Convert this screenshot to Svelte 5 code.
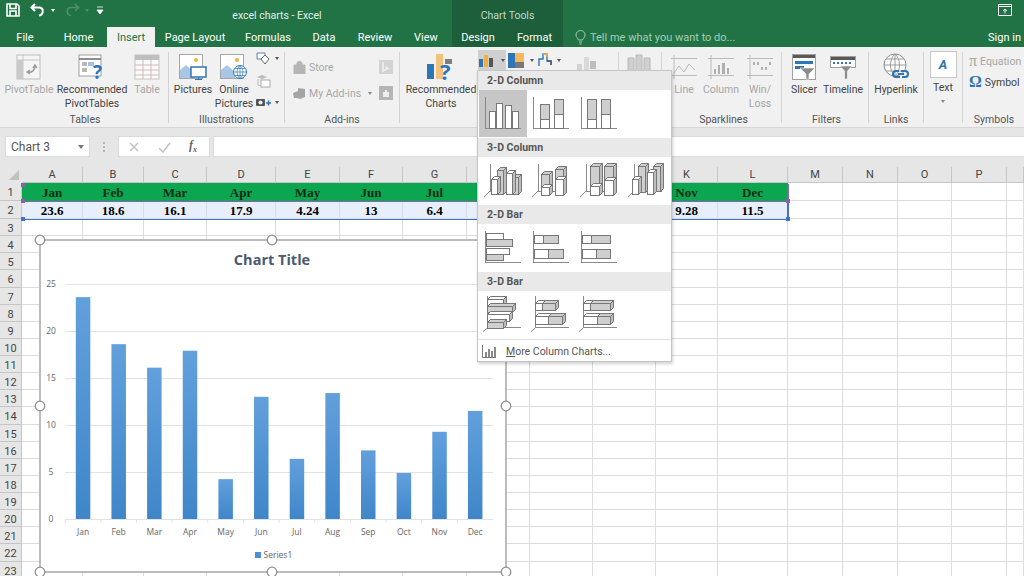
<script>
  const leftTabs = [
    ['File', 50], ['Home', 57], ['Insert', 48], ['Page Layout', 80],
    ['Formulas', 66], ['Data', 46], ['Review', 56], ['View', 46]
  ];
  // the last column runs off the right edge, its letter is not on screen
  const columns = [...'ABCDEFGHIJKLMNOP'.split(''), ''];
  const months = ['Jan', 'Feb', 'Mar', 'Apr', 'May', 'Jun', 'Jul', 'Aug', 'Sep', 'Oct', 'Nov', 'Dec'];
  const values = [23.6, 18.6, 16.1, 17.9, 4.24, 13, 6.4, 13.4, 7.3, 4.9, 9.28, 11.5];
  const rows = Array.from({ length: 23 }, (_, i) => i + 1);

  function cellText(row, index) {
    if (index >= 12) return '';
    if (row === 1) return months[index];
    if (row === 2) return values[index];
    return '';
  }

  const handles = [
    [40, 240], [272, 240], [506, 240], [40, 406],
    [506, 406], [40, 572], [272, 572], [506, 572]
  ];
  const ticks = [0, 5, 10, 15, 20, 25];
  const yOf = (v) => 519 - v * 9.4;
  const xOf = (i) => 83 + i * 35.65;

  const W = '#fff';
  const G = '#cfcfcf';

  // x, y, w, h, fill for the flat chart thumbnails
  const flatColumn = [
    [[10, 21, 6, 17, W], [17, 13, 6, 25, W], [26, 15, 6, 23, W], [33, 21, 6, 17, W]],
    [[13, 14, 9, 15, G], [13, 29, 9, 9, W], [27, 9, 9, 15, G], [27, 24, 9, 14, W]],
    [[12, 9, 9, 20, G], [12, 29, 9, 9, W], [26, 9, 9, 15, G], [26, 24, 9, 14, W]]
  ];
  const flatBar = [
    [[7, 9, 17, 6, W], [7, 15, 26, 7, G], [7, 24, 23, 6, W], [7, 30, 17, 6, G]],
    [[7, 11, 9, 8, W], [16, 11, 15, 8, G], [7, 25, 14, 9, W], [21, 25, 15, 9, G]],
    [[7, 11, 9, 8, W], [16, 11, 19, 8, G], [7, 25, 14, 9, W], [21, 25, 14, 9, G]]
  ];
  // x, y, w, h, fill, for the boxes with depth
  const boxColumn = [
    [[18, 13, 6, 24, G], [33, 20, 6, 17, G], [12, 22, 6, 15, W], [27, 16, 6, 21, W]],
    [[14, 17, 8, 13, G], [14, 30, 8, 8, W], [28, 12, 8, 10, G], [28, 22, 8, 16, W]],
    [[15, 9, 9, 20, G], [15, 29, 9, 9, W], [29, 9, 9, 14, G], [29, 23, 9, 15, W]],
    [[15, 9, 7, 26, G], [30, 9, 7, 25, G], [9, 22, 6, 15, W], [24, 15, 6, 22, W]]
  ];
  const boxBar = [
    [[8, 8, 16, 6, W], [8, 15, 25, 6, G], [8, 23, 22, 7, W], [8, 31, 16, 6, G]],
    [[8, 12, 7, 7, W], [15, 12, 13, 7, G], [8, 25, 13, 8, W], [21, 25, 14, 8, G]],
    [[8, 12, 7, 7, W], [15, 12, 20, 7, G], [8, 25, 14, 8, W], [22, 25, 13, 8, G]]
  ];

  function faces(x, y, w, h, d = 3) {
    return {
      top: `${x},${y} ${x + d},${y - d} ${x + w + d},${y - d} ${x + w},${y}`,
      side: `${x + w},${y} ${x + w + d},${y - d} ${x + w + d},${y + h - d} ${x + w},${y + h}`
    };
  }
</script>

{#snippet flat(sets, horizontal)}
  <div class="thumbs">
    {#each sets as bars, n}
      <div class="thumb" class:picked={!horizontal && n === 0}>
        <svg width="47" height="47" viewBox="0 0 47 47">
          <path d="M6.5 7v32M6 38.5h36" class="axis" />
          {#each bars as [x, y, w, h, fill]}
            <rect x={x + 0.5} y={y + 0.5} width={w} height={h} {fill} class="bar" />
          {/each}
        </svg>
      </div>
    {/each}
  </div>
{/snippet}

{#snippet boxes(sets, horizontal)}
  <div class="thumbs">
    {#each sets as bars}
      <div class="thumb">
        <svg width="47" height="47" viewBox="0 0 47 47">
          {#if horizontal}
            <path d="M8.5 5v32M8 37.5l-4 3M8 36.5h34" class="axis" />
          {:else}
            <path d="M11.5 7v28M11 34l-6 6M11 34.5h28" class="axis" />
          {/if}
          {#each bars as [x, y, w, h, fill]}
            {@const f = faces(x, y, w, h)}
            <rect x={x + 0.5} y={y + 0.5} width={w} height={h} {fill} class="bar" />
            <polygon points={f.top} transform="translate(.5 .5)" {fill} class="bar" />
            <polygon points={f.side} transform="translate(.5 .5)" fill="#bdbdbd" class="bar" />
          {/each}
        </svg>
      </div>
    {/each}
  </div>
{/snippet}

<div class="window">
  <header class="head">
    <div class="top-row">
      <div class="qat">
        <svg width="16" height="16" viewBox="0 0 16 16"><path d="M2 2h10l2 2v10H2zM5 2.5v4h6v-4M5 14v-5h6v5" fill="none" stroke="#fff" stroke-width="1.6" /></svg>
        <svg class="undo" width="18" height="16" viewBox="0 0 18 16"><path d="M6 2 2.5 5.5 6 9M3 5.5h7c5 0 5 7 0 8" fill="none" stroke="#fff" stroke-width="2" /></svg>
        <span class="caret"></span>
        <svg class="redo" width="18" height="16" viewBox="0 0 18 16"><path d="M12 2l3.5 3.5L12 9M15 5.5H8c-5 0-5 7 0 8" fill="none" stroke="#4b8f69" stroke-width="1.6" /></svg>
        <span class="caret off"></span>
        <svg class="custom" width="8" height="9" viewBox="0 0 8 9"><path d="M1 1h6M1 4h6l-3 4z" fill="#fff" stroke="#fff" stroke-width=".8" /></svg>
      </div>
      <div class="doc-title">excel charts - Excel</div>
      <div class="ctx-title">Chart Tools</div>
      <div class="win-ctl">
        <svg width="14" height="12" viewBox="0 0 14 12"><path d="M.5 .5h13v11H.5zM1 2.5h12M7 9.5V5M5 7l2-2 2 2" fill="none" stroke="#fff" /></svg>
      </div>
    </div>
    <nav class="tab-row">
      <div class="tabs">
        {#each leftTabs as [name, width]}
          <span class="tab" class:active={name === 'Insert'} style="width:{width}px">{name}</span>
        {/each}
      </div>
      <div class="ctx-tabs">
        <span class="tab design">Design</span>
        <span class="tab format">Format</span>
      </div>
      <div class="tell">
        <svg width="11" height="15" viewBox="0 0 11 15"><path d="M3.5 10C3 8 1 7.5 1 5a4.5 4.5 0 0 1 9 0c0 2.5-2 3-2.5 5zM4 12h3M4.5 14h2" fill="none" stroke="#a5cdb5" /></svg>
        <span>Tell me what you want to do...</span>
      </div>
      <span class="sign">Sign in</span>
    </nav>
  </header>

  <section class="ribbon">
    <div class="group g-tables">
      <div class="body">
        <div class="big off">
          <svg width="26" height="26" viewBox="0 0 26 26"><rect x="1" y="1" width="23" height="24" fill="#f5f5f5" stroke="#bdbdbd" /><path d="M1 6h23M7 1v24" stroke="#c8c8c8" fill="#d0d0d0" /><rect x="1" y="6" width="6" height="19" fill="#c9c9c9" /><path d="M12 18c4 1 7-2 7-6M17 14l2-3 2 3M14 16l-3 2 3 2" fill="none" stroke="#9a9a9a" stroke-width="1.4" /></svg>
          <span>PivotTable</span>
        </div>
        <div class="big">
          <svg width="28" height="26" viewBox="0 0 28 26"><rect x="1" y="1" width="22" height="21" fill="#fff" stroke="#a0a0a0" /><path d="M1 5h22" stroke="#8d8d8d" stroke-width="2" /><rect x="4" y="8" width="5" height="4" fill="#b8b8b8" /><rect x="10" y="8" width="6" height="4" fill="#9dc3e6" /><rect x="4" y="14" width="5" height="4" fill="#b8b8b8" /><text x="15" y="25" class="q">?</text></svg>
          <span>Recommended<br />PivotTables</span>
        </div>
        <div class="big off">
          <svg width="26" height="26" viewBox="0 0 26 26"><rect x="1" y="1" width="24" height="24" fill="#fafafa" stroke="#c4c4c4" /><rect x="1" y="1" width="24" height="5" fill="#bfbfbf" /><path d="M1 11h24M1 16h24M1 21h24M9 6v19M17 6v19" stroke="#d2b8b8" /></svg>
          <span>Table</span>
        </div>
      </div>
      <div class="name">Tables</div>
    </div>
    <i class="sep"></i>

    <div class="group g-illus">
      <div class="body">
        <div class="big">
          <svg width="28" height="26" viewBox="0 0 28 26"><rect x=".5" y=".5" width="23" height="24" fill="#fff" stroke="#a6a6a6" /><circle cx="17" cy="6" r="2" fill="#f0b040" /><path d="M1 24V16l6-5 8 7v6z" fill="#a9c6e6" /><rect x="12" y="13" width="15" height="10" fill="#fff" stroke="#2e75b6" stroke-width="1.5" /><path d="M19.5 23v2M16 25.5h7" stroke="#2e75b6" /></svg>
          <span>Pictures</span>
        </div>
        <div class="big">
          <svg width="28" height="26" viewBox="0 0 28 26"><rect x=".5" y=".5" width="23" height="24" fill="#fff" stroke="#a6a6a6" /><circle cx="17" cy="6" r="2" fill="#f0b040" /><path d="M1 24V16l6-5 8 7v6z" fill="#a9c6e6" /><circle cx="20" cy="18" r="6.5" fill="#fff" stroke="#2e75b6" /><path d="M13.5 18h13M20 11.5v13M15 14.5h10M15 21.5h10M20 11.5c-4 3-4 10 0 13M20 11.5c4 3 4 10 0 13" fill="none" stroke="#2e75b6" stroke-width=".7" /></svg>
          <span>Online<br />Pictures</span>
        </div>
        <div class="mini-stack">
          <div class="mini"><svg width="15" height="13" viewBox="0 0 15 13"><path d="M1 1h8v6H1z" fill="#fff" stroke="#5b83ad" /><path d="M9 3l4 4-4 5-4-5z" fill="#fff" stroke="#666" /></svg><span class="caret dark"></span></div>
          <div class="mini"><svg width="15" height="14" viewBox="0 0 15 14"><path d="M1 3l5-2 5 2-5 2z" fill="#bbb" /><rect x="5" y="6" width="9" height="7" fill="#fff" stroke="#aaa" /><path d="M2 5v6l3 1" stroke="#bbb" fill="none" /></svg></div>
          <div class="mini"><svg width="15" height="11" viewBox="0 0 15 11"><rect x="0" y="2" width="9" height="7" rx="1" fill="#555" /><circle cx="4.5" cy="5.5" r="2" fill="#eee" /><path d="M10 6h5M12.5 3.5v5" stroke="#2e75b6" stroke-width="1.6" /></svg><span class="caret dark"></span></div>
        </div>
      </div>
      <div class="name">Illustrations</div>
    </div>
    <i class="sep"></i>

    <div class="group g-addins">
      <div class="body addin-body">
        <div class="addin off">
          <svg width="13" height="13" viewBox="0 0 13 13"><path d="M1 4h11v9H1zM4 4V2c0-2 5-2 5 0v2" fill="#b5b5b5" stroke="#b5b5b5" /></svg>
          <span class="addin-label">Store</span>
          <svg width="14" height="14" viewBox="0 0 14 14"><rect width="14" height="14" fill="#d3d3d3" /><path d="M4 2v9l5-2.5L6.5 7" fill="none" stroke="#f2f2f2" stroke-width="1.5" /></svg>
        </div>
        <div class="addin off">
          <svg width="13" height="13" viewBox="0 0 13 13"><path d="M0 6l5-2V1l7 1v8l-5 2-3-1-3 0z" fill="#a5a5a5" /></svg>
          <span class="addin-label">My Add-ins</span>
          <span class="caret gray"></span>
          <svg width="14" height="14" viewBox="0 0 14 14"><rect width="14" height="14" fill="#b5b5b5" /><path d="M4 6h6v5H4zM6 6V4h2v2" fill="#eee" /></svg>
        </div>
      </div>
      <div class="name">Add-ins</div>
    </div>
    <i class="sep"></i>

    <div class="group g-charts">
      <div class="body">
        <div class="big rec">
          <svg width="32" height="28" viewBox="0 0 32 28"><rect x="2" y="11" width="7" height="15" fill="#2e75b6" /><rect x="11" y="1" width="7" height="25" fill="#f2c27a" /><rect x="20" y="6" width="7" height="5" fill="#7f7f7f" /><text x="15" y="27" class="q big-q">?</text></svg>
          <span>Recommended<br />Charts</span>
        </div>
        <div class="chart-btn on">
          <svg width="18" height="14" viewBox="0 0 18 14"><rect x="0" y="6" width="4" height="8" fill="#2e75b6" /><rect x="5" y="2" width="4" height="12" fill="#f0b040" /><rect x="10" y="5" width="4" height="9" fill="#555" /></svg>
          <span class="caret dark"></span>
        </div>
        <div class="chart-btn">
          <svg width="18" height="15" viewBox="0 0 18 15"><rect x="0" y="0" width="7" height="15" fill="#2e75b6" /><rect x="7" y="0" width="9" height="9" fill="#f4b860" /><rect x="7" y="9" width="9" height="6" fill="#777" /></svg>
          <span class="caret dark"></span>
        </div>
        <div class="chart-btn">
          <svg width="15" height="14" viewBox="0 0 15 14"><path d="M1 13V6h4V1h4v7h4v4" fill="none" stroke="#2e75b6" stroke-width="1.4" /><path d="M5 1h4v3" fill="none" stroke="#f0b040" stroke-width="1.4" /><path d="M9 8h4v4" fill="none" stroke="#555" stroke-width="1.4" /></svg>
          <span class="caret dark"></span>
        </div>
        <div class="pivot-chart">
          <svg width="26" height="17" viewBox="0 0 26 17"><rect x="0" y="9" width="5" height="7" fill="#d4d4d4" /><rect x="7" y="2" width="5" height="14" fill="#d9d9d9" /><rect x="13" y="6" width="6" height="8" fill="#bdbdbd" /><path d="M2 16h24" stroke="#d0d0d0" /></svg>
        </div>
      </div>
      <div class="name"></div>
    </div>
    <i class="sep"></i>

    <div class="group g-map">
      <div class="body map-body">
        <svg width="26" height="22" viewBox="0 0 26 22"><path d="M2 4h6v15H2zM10 1h6v18h-6zM18 4h6v15h-6z" fill="#cfcfcf" stroke="#b8b8b8" /></svg>
      </div>
      <div class="name"></div>
    </div>
    <i class="sep"></i>

    <div class="group g-spark">
      <div class="body">
        <div class="big off">
          <svg width="26" height="24" viewBox="0 0 26 24"><path d="M0 3.5h26M0 20.5h26M3 0v24M3 18l5-7 5 6 5-8 6 6" fill="none" stroke="#bbb" /></svg>
          <span>Line</span>
        </div>
        <div class="big off">
          <svg width="26" height="24" viewBox="0 0 26 24"><path d="M0 3.5h26M0 20.5h26M3 0v24" fill="none" stroke="#bbb" /><path d="M6 14h2v5H6zM10 10h2v9h-2zM14 8h3v11h-3zM19 13h2v6h-2z" fill="#b0b0b0" /></svg>
          <span>Column</span>
        </div>
        <div class="big off">
          <svg width="26" height="24" viewBox="0 0 26 24"><path d="M0 3.5h26M0 20.5h26M3 0v24" fill="none" stroke="#bbb" /><path d="M6 7h2v3H6zM10 7h2v3h-2zM14 12h2v3h-2zM18 12h2v3h-2zM22 7h2v3h-2z" fill="#b0b0b0" /></svg>
          <span>Win/<br />Loss</span>
        </div>
      </div>
      <div class="name">Sparklines</div>
    </div>
    <i class="sep"></i>

    <div class="group g-filters">
      <div class="body">
        <div class="big">
          <svg width="24" height="26" viewBox="0 0 24 26"><rect x=".5" y=".5" width="23" height="25" fill="#fff" stroke="#a0a0a0" /><rect x="1" y="1" width="22" height="3" fill="#595959" /><rect x="3" y="7" width="18" height="3" fill="#2e75b6" /><rect x="3" y="12" width="9" height="3" fill="#2e75b6" /><path d="M8 14h15l-6 6v5h-3v-5z" fill="#8c8c8c" stroke="#fff" stroke-width=".6" /></svg>
          <span>Slicer</span>
        </div>
        <div class="big">
          <svg width="26" height="26" viewBox="0 0 26 26"><rect x=".5" y="2.5" width="25" height="11" fill="#fff" stroke="#a0a0a0" /><rect x="1" y="3" width="24" height="3" fill="#595959" /><path d="M3 9h2M7 9h2M11 9h2M15 9h2M19 9h2" stroke="#2e75b6" stroke-width="2" /><path d="M10 12h12l-4.5 5v8h-3v-8z" fill="#8c8c8c" stroke="#fff" stroke-width=".6" /></svg>
          <span>Timeline</span>
        </div>
      </div>
      <div class="name">Filters</div>
    </div>
    <i class="sep"></i>

    <div class="group g-links">
      <div class="body">
        <div class="big">
          <svg width="26" height="28" viewBox="0 0 26 28"><circle cx="12" cy="12" r="11" fill="#fff" stroke="#8a8a8a" /><path d="M1 12h22M12 1v22M3 6h18M3 18h18M12 1c-6 5-6 17 0 22M12 1c6 5 6 17 0 22" fill="none" stroke="#9a9a9a" /><path d="M17 20h-3a3 3 0 0 0 0 6h4M20 26h3a3 3 0 0 0 0-6h-4M16 23h6" fill="none" stroke="#2e75b6" stroke-width="2" transform="translate(-1 -2)" /></svg>
          <span>Hyperlink</span>
        </div>
      </div>
      <div class="name">Links</div>
    </div>
    <i class="sep"></i>

    <div class="group g-text">
      <div class="body">
        <div class="big text-btn">
          <div class="text-box"><span>A</span></div>
          <span>Text</span>
          <span class="caret gray"></span>
        </div>
      </div>
      <div class="name"></div>
    </div>
    <i class="sep"></i>

    <div class="group g-sym">
      <div class="body sym-body">
        <div class="sym off"><b class="glyph">π</b><span>Equation</span></div>
        <div class="sym"><b class="glyph blue">Ω</b><span>Symbol</span></div>
      </div>
      <div class="name">Symbols</div>
    </div>
  </section>

  <div class="formula">
    <div class="namebox"><span>Chart 3</span><span class="caret dark"></span></div>
    <div class="dots"></div>
    <div class="fx-box">
      <svg width="12" height="12" viewBox="0 0 12 12"><path d="M2 2l8 8M10 2l-8 8" stroke="#c4c4c4" stroke-width="1.6" /></svg>
      <svg width="13" height="12" viewBox="0 0 13 12"><path d="M1 7l4 4 7-9" fill="none" stroke="#c4c4c4" stroke-width="1.6" /></svg>
      <span class="fx">f<sub>x</sub></span>
    </div>
    <div class="input"></div>
  </div>

  <main class="sheet">
    <div class="grid">
      <div class="corner"><i></i></div>
      {#each columns as col}
        <div class="col-head">{col}</div>
      {/each}
      {#each rows as row}
        <div class="row-head">{row}</div>
        {#each columns as col, index}
          <div
            class="cell"
            class:month={row === 1 && index < 12}
            class:value={row === 2 && index < 12}
          >{cellText(row, index)}</div>
        {/each}
      {/each}
    </div>

    <div class="range-one"></div>
    <div class="range-two"></div>
    <div class="range-end one"></div>
    <div class="range-end two"></div>
    <i class="dot purple d1"></i>
    <i class="dot purple d2"></i>
    <i class="dot purple d3"></i>
    <i class="dot blue d4"></i>
    <i class="dot blue d5"></i>

    <svg class="chart" width="478" height="344" viewBox="34 234 478 344">
      <defs>
        <linearGradient id="bar" x1="0" y1="0" x2="0" y2="1">
          <stop offset="0" stop-color="#62a0dc" />
          <stop offset="1" stop-color="#3f86c9" />
        </linearGradient>
      </defs>
      <rect x="40" y="240" width="466" height="332" fill="#fff" stroke="#a6a6a6" stroke-width="1.5" />
      <text x="272" y="265" text-anchor="middle" class="c-title">Chart Title</text>
      {#each ticks as t}
        <line x1="65" x2="493" y1={yOf(t) + 0.5} y2={yOf(t) + 0.5} stroke="#e2e2e2" />
        <text x="51" y={yOf(t) + 3} text-anchor="middle" class="c-label">{t}</text>
      {/each}
      {#each values as v, i}
        <rect x={xOf(i) - 7.2} y={yOf(v)} width="14.5" height={v * 9.4} fill="url(#bar)" />
        <line x1={xOf(i) - 17.8} x2={xOf(i) - 17.8} y1="519" y2="523" stroke="#e2e2e2" />
        <text x={xOf(i)} y="535" text-anchor="middle" class="c-label">{months[i]}</text>
      {/each}
      <rect x="255" y="552" width="6" height="6" fill="#4a90d2" />
      <text x="263.5" y="558" class="c-label">Series1</text>
      {#each handles as [x, y]}
        <circle cx={x} cy={y} r="4.8" fill="#fff" stroke="#8f8f8f" stroke-width="1.3" />
      {/each}
    </svg>
  </main>

  <aside class="menu">
    <h4>2-D Column</h4>
    {@render flat(flatColumn, false)}
    <h4>3-D Column</h4>
    {@render boxes(boxColumn, false)}
    <h4>2-D Bar</h4>
    {@render flat(flatBar, true)}
    <h4>3-D Bar</h4>
    {@render boxes(boxBar, true)}
    <div class="more">
      <svg width="14" height="13" viewBox="0 0 14 13"><path d="M.5 0v12.5H14" fill="none" stroke="#777" /><path d="M3 7h2v5H3zM6 4h2v8H6zM9 6h2v6H9zM12 2h2v10h-2z" fill="#888" /></svg>
      <span><u>M</u>ore Column Charts...</span>
    </div>
  </aside>
</div>

<style>
  :global(body) {
    margin: 0;
    background: #fff;
  }

  .window {
    position: relative;
    width: 1024px;
    height: 576px;
    overflow: hidden;
    font-family: Roboto, 'Open Sans', sans-serif;
    font-size: 10.5px;
    color: #444;
    background: #e6e6e6;
  }

  .head {
    background: #217346;
    color: #fff;
  }

  .top-row {
    display: flex;
    height: 27px;
  }

  .qat {
    width: 190px;
    display: flex;
    align-items: center;
    padding: 0 0 7px 5px;
    box-sizing: border-box;
  }

  .undo { margin-left: 8px; }
  .redo { margin-left: 8px; }
  .custom { margin-left: 7px; }

  .caret {
    display: inline-block;
    width: 0;
    height: 0;
    margin-left: 4px;
    border: 2.5px solid transparent;
    border-top: 3px solid #fff;
    border-bottom: 0;
  }

  .caret.off { border-top-color: #4b8f69; }
  .caret.dark { border-top-color: #555; }
  .caret.gray { border-top-color: #888; }

  .doc-title {
    width: 262px;
    padding: 9px 88px 0 0;
    text-align: center;
    box-sizing: border-box;
    color: #e3efe8;
  }

  .ctx-title {
    width: 111px;
    background: #1d5f3b;
    text-align: center;
    padding-top: 9px;
    box-sizing: border-box;
    color: #bfd9ca;
  }

  .win-ctl {
    flex: 1;
    display: flex;
    justify-content: flex-end;
    padding: 4px 12px 0 0;
    box-sizing: border-box;
  }

  .tab-row {
    display: flex;
    height: 20px;
    font-size: 11px;
  }

  .tabs {
    width: 452px;
    display: flex;
  }

  .tab {
    display: block;
    text-align: center;
    line-height: 21px;
    white-space: nowrap;
  }

  .tab.active {
    background: #f1f1f1;
    color: #217346;
  }

  .ctx-tabs {
    width: 111px;
    display: flex;
    background: #1d5f3b;
  }

  .design { width: 52px; }
  .format { width: 59px; padding-left: 2px; box-sizing: border-box; }

  .tell {
    flex: 1;
    display: flex;
    align-items: center;
    gap: 4px;
    padding: 1px 0 0 12px;
    color: #a5cdb5;
  }

  .sign {
    line-height: 21px;
    padding-right: 3px;
  }

  .ribbon {
    display: flex;
    height: 80px;
    background: #f1f1f1;
    border-bottom: 1px solid #d6d6d6;
  }

  .sep {
    flex: none;
    width: 1px;
    margin: 5px 0 4px;
    background: #d4d4d4;
  }

  .group {
    flex: none;
    display: flex;
    flex-direction: column;
    box-sizing: border-box;
  }

  .g-tables { width: 168px; padding-left: 2px; }
  .g-illus { width: 115px; }
  .g-addins { width: 114px; }
  .g-charts { width: 218px; }
  .g-map { width: 42px; }
  .g-spark { width: 119px; padding-left: 4px; }
  .g-filters { width: 86px; padding-left: 3px; }
  .g-links { width: 54px; }
  .g-text { width: 38px; }
  .g-sym { width: 62px; }

  .body {
    height: 65px;
    display: flex;
  }

  .name {
    height: 15px;
    text-align: center;
    line-height: 16px;
    color: #555;
  }

  .big {
    display: flex;
    flex-direction: column;
    align-items: center;
    text-align: center;
    line-height: 14px;
    flex: none;
  }

  .big svg {
    height: 28px;
    margin: 6px 0 2px;
  }

  .big span {
    white-space: nowrap;
  }

  .off { color: #a6a6a6; }

  .g-tables .big:nth-child(1) { width: 54px; }
  .g-tables .big:nth-child(2) { width: 72px; }
  .g-tables .big:nth-child(3) { width: 38px; }
  .g-illus .big:nth-child(1) { width: 48px; }
  .g-illus .big:nth-child(2) { width: 34px; }
  .g-spark .big:nth-child(1) { width: 36px; }
  .g-spark .big:nth-child(2) { width: 38px; }
  .g-spark .big:nth-child(3) { width: 40px; }
  .g-filters .big:nth-child(1) { width: 38px; }
  .g-filters .big:nth-child(2) { width: 40px; }
  .g-links .big { width: 54px; }

  .q {
    font-family: 'Open Sans', sans-serif;
    font-weight: 700;
    font-size: 19px;
    fill: #2e75b6;
  }

  .big-q { font-size: 22px; }

  .mini-stack {
    display: flex;
    flex-direction: column;
    gap: 7px;
    padding: 4px 0 0 5px;
  }

  .mini {
    display: flex;
    align-items: center;
    height: 15px;
  }

  .addin-body {
    flex-direction: column;
    gap: 4px;
    padding: 9px 6px 0 8px;
    box-sizing: border-box;
  }

  .addin {
    display: flex;
    align-items: center;
    height: 22px;
  }

  .addin-label {
    flex: 1;
    padding-left: 3px;
  }

  .addin .caret {
    margin-right: 7px;
  }

  .rec {
    width: 74px;
    padding-left: 4px;
  }

  .chart-btn {
    flex: none;
    display: flex;
    align-items: center;
    justify-content: center;
    height: 20px;
    margin-top: 3px;
    width: 28px;
  }

  .chart-btn.on {
    background: #cfcfcf;
  }

  .chart-btn:nth-child(3) { width: 30px; }
  .chart-btn:nth-child(4) { width: 27px; }

  .pivot-chart {
    padding: 8px 0 0 14px;
  }

  .map-body {
    padding: 7px 0 0 7px;
    box-sizing: border-box;
  }

  .text-btn {
    width: 38px;
  }

  .text-box {
    width: 25px;
    height: 25px;
    margin: 4px 0 3px;
    background: #fff;
    border: 1px solid #c6c6c6;
    display: flex;
    align-items: center;
    justify-content: center;
    font-weight: 700;
    font-style: italic;
    font-size: 13px;
    color: #2e75b6;
  }

  .text-btn .caret {
    margin: 5px 0 0;
  }

  .sym-body {
    flex-direction: column;
    gap: 3px;
    padding: 5px 0 0 6px;
    box-sizing: border-box;
  }

  .sym {
    display: flex;
    align-items: center;
    gap: 3px;
    height: 18px;
    white-space: nowrap;
  }

  .glyph {
    font-family: 'Liberation Serif', serif;
    font-size: 16px;
    font-weight: 400;
    color: #a6a6a6;
  }

  .glyph.blue { color: #2e75b6; font-weight: 700; }

  .formula {
    display: flex;
    align-items: stretch;
    height: 21px;
    margin-top: 8px;
    padding-left: 5px;
  }

  .namebox {
    width: 85px;
    background: #fff;
    border: 1px solid #dadada;
    box-sizing: border-box;
    display: flex;
    align-items: center;
    justify-content: space-between;
    padding: 0 5px;
    font-size: 12px;
    color: #555;
  }

  .namebox .caret {
    border-width: 3px;
    border-bottom: 0;
    border-top-width: 4px;
    border-top-color: #777;
  }

  .dots {
    width: 2px;
    margin: 6px 13px 5px;
    background: repeating-linear-gradient(#b5b5b5 0 2px, transparent 2px 4px);
  }

  .fx-box {
    width: 92px;
    background: #fff;
    border: 1px solid #dadada;
    box-sizing: border-box;
    display: flex;
    align-items: center;
    gap: 18px;
    padding-left: 9px;
  }

  .fx {
    font-family: 'Liberation Serif', serif;
    font-style: italic;
    font-size: 12px;
    font-weight: 700;
    color: #666;
  }

  .fx sub {
    font-size: 8px;
  }

  .input {
    flex: 1;
    margin-left: 3px;
    background: #fff;
    border: 1px solid #dadada;
    border-right: 0;
  }

  .sheet {
    position: relative;
    margin-top: 10px;
  }

  .grid {
    display: grid;
    grid-template-columns: 22px 61px 61px 63px 69px 64px 63px 64px 63px 63px 63px 62px 70px 55px 55px 54px 55px 17px;
    grid-template-rows: 16px 18px 18px;
    grid-auto-rows: 17.14px;
    background: #fff;
  }

  .corner {
    background: #e6e6e6;
    position: relative;
  }

  .corner i {
    position: absolute;
    right: 3px;
    bottom: 3px;
    border-style: solid;
    border-width: 0 0 10px 10px;
    border-color: transparent transparent #c0c0c0 transparent;
  }

  .col-head {
    background: #e6e6e6;
    border-right: 1px solid #c6c6c6;
    border-bottom: 1px solid #c6c6c6;
    box-sizing: border-box;
    text-align: center;
    line-height: 15px;
    font-size: 11px;
    color: #444;
  }

  .row-head {
    background: #e6e6e6;
    border-right: 1px solid #c6c6c6;
    border-bottom: 1px solid #c6c6c6;
    box-sizing: border-box;
    text-align: center;
    line-height: 19px;
    font-size: 11px;
    color: #444;
  }

  .cell {
    border-right: 1px solid #dcdcdc;
    border-bottom: 1px solid #dcdcdc;
    box-sizing: border-box;
    text-align: center;
    font-family: 'Liberation Serif', serif;
    font-weight: 700;
    font-size: 13px;
    line-height: 19px;
    color: #000;
  }

  .month {
    background: #0ca550;
    color: #0c2b14;
    border-color: #0ca550;
  }

  .value {
    background: #e8effa;
    border-color: #d3dcea;
  }

  .range-one, .range-two {
    position: absolute;
    left: 22px;
    width: 766px;
    height: 1.5px;
  }

  .range-one {
    top: 33.5px;
    background: #8c5fb0;
  }

  .range-two {
    top: 51.5px;
    background: #4472c4;
  }

  .range-end {
    position: absolute;
    left: 787px;
    width: 1.5px;
    height: 17px;
  }

  .range-end.one {
    top: 17px;
    background: #8c5fb0;
  }

  .range-end.two {
    top: 35px;
    background: #4472c4;
  }

  .dot {
    position: absolute;
    width: 4px;
    height: 4px;
  }

  .dot.purple { background: #8c5fb0; }
  .dot.blue { background: #4472c4; }
  .d1 { left: 21px; top: 16px; }
  .d2 { left: 21px; top: 32px; }
  .d3 { left: 786px; top: 32px; }
  .d4 { left: 21px; top: 50px; }
  .d5 { left: 786px; top: 50px; }

  .chart {
    position: absolute;
    left: 34px;
    top: 67px;
    display: block;
  }

  .c-title {
    font-family: 'Open Sans', sans-serif;
    font-weight: 700;
    font-size: 14.5px;
    fill: #4a5a70;
  }

  .c-label {
    font-family: 'Open Sans', sans-serif;
    font-size: 8.5px;
    fill: #666;
  }

  .menu {
    position: absolute;
    left: 477px;
    top: 70px;
    width: 195px;
    height: 292px;
    box-sizing: border-box;
    background: #fff;
    border: 1px solid #c6c6c6;
    box-shadow: 1px 2px 3px rgba(0, 0, 0, 0.18);
  }

  .menu h4 {
    margin: 0;
    height: 19px;
    padding-left: 9px;
    background: #e9e9e9;
    font-size: 10.5px;
    font-weight: 700;
    line-height: 19px;
    color: #555;
  }

  .thumbs {
    display: flex;
    padding-left: 1px;
    height: 48px;
  }

  .thumb {
    width: 48px;
    height: 47px;
  }

  .thumb svg {
    display: block;
  }

  .thumb.picked {
    background: #c6c6c6;
  }

  .axis {
    fill: none;
    stroke: #8a8a8a;
  }

  .bar {
    stroke: #777;
    stroke-width: 1;
  }

  .more {
    display: flex;
    align-items: center;
    gap: 10px;
    height: 22px;
    padding-left: 4px;
    border-top: 1px solid #e0e0e0;
    color: #555;
  }
</style>
